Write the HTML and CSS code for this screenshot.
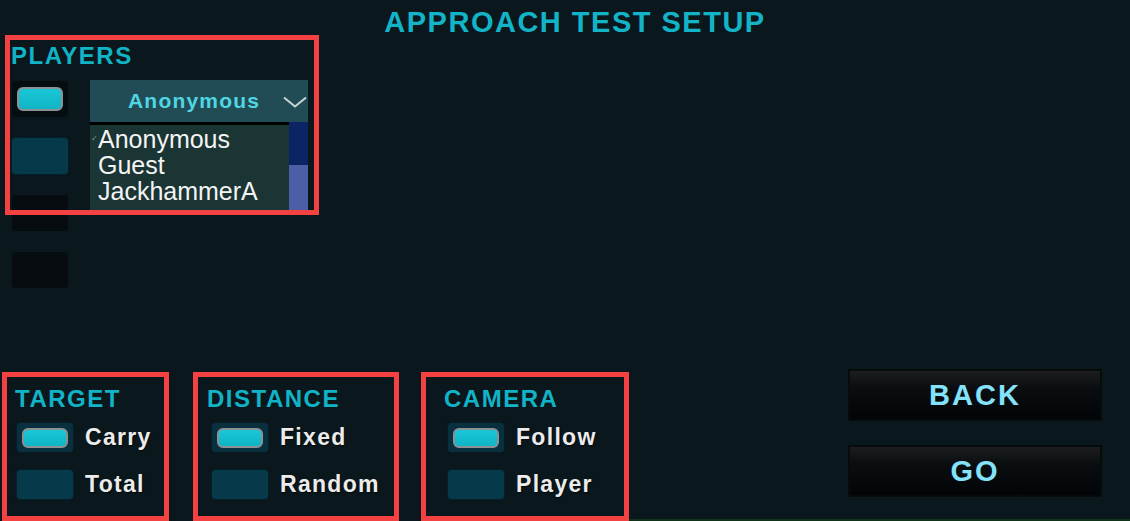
FILE: index.html
```html
<!DOCTYPE html>
<html lang="en">

<head>
    <meta charset="UTF-8">
    <meta name="viewport" content="width=device-width, initial-scale=1.0">
    <title>Approach Test Setup</title>
    <link rel="stylesheet" href="styles.css">
</head>

<body>
    <h1 class="title">APPROACH TEST SETUP</h1>

    <section class="players frame">
        <h2 class="group-label">PLAYERS</h2>
        <div class="players-body">
            <div class="slots">
                <div class="slot slot-on"><span class="pill"></span></div>
                <div class="slot slot-free"></div>
                <div class="slot slot-empty"></div>
                <div class="slot slot-empty"></div>
            </div>

            <div class="dropdown">
                <div class="dropdown-head">
                    <span class="dropdown-value">Anonymous</span>
                    <svg class="chevron" width="24" height="12" viewBox="0 0 24 12">
                        <polyline points="1,1.5 12,10.5 23,1.5" fill="none" stroke="#c6d4d6" stroke-width="2"/>
                    </svg>
                </div>
                <div class="dropdown-list">
                    <ul class="list-items">
                        <li class="selected">Anonymous</li>
                        <li>Guest</li>
                        <li>JackhammerA</li>
                    </ul>
                    <div class="scrollbar"><div class="scroll-top"></div></div>
                </div>
            </div>
        </div>
    </section>

    <div class="bottom">
        <section class="group group-target frame">
            <h2 class="group-label">TARGET</h2>
            <div class="options">
                <div class="option"><span class="toggle toggle-on"><span class="pill"></span></span>Carry</div>
                <div class="option"><span class="toggle"></span>Total</div>
            </div>
        </section>

        <section class="group group-distance frame">
            <h2 class="group-label">DISTANCE</h2>
            <div class="options">
                <div class="option"><span class="toggle toggle-on"><span class="pill"></span></span>Fixed</div>
                <div class="option"><span class="toggle"></span>Random</div>
            </div>
        </section>

        <section class="group group-camera frame">
            <h2 class="group-label">CAMERA</h2>
            <div class="options">
                <div class="option"><span class="toggle toggle-on"><span class="pill"></span></span>Follow</div>
                <div class="option"><span class="toggle"></span>Player</div>
            </div>
        </section>

        <div class="actions">
            <button class="action" type="button">BACK</button>
            <button class="action" type="button">GO</button>
        </div>
    </div>
</body>

</html>
```

FILE: styles.css
```css
body {
    margin: 0;
    padding: 0;
    width: 1130px;
    height: 521px;
    overflow: hidden;
    background-color: #0a171c;
    background-image: linear-gradient(to right, transparent 560px, #10331a 560px);
    background-size: 100% 2px;
    background-position: bottom;
    background-repeat: no-repeat;
    font-family: "Liberation Sans", Arial, sans-serif;
}

.title {
    margin: 0;
    padding: 9px 0 0 20px;
    font-size: 29px;
    line-height: 26px;
    font-weight: 700;
    letter-spacing: 1.5px;
    color: #13b4c8;
    text-align: center;
}

/* red outline drawn over each block */
.frame {
    position: relative;
    box-sizing: border-box;
}

.frame::after {
    content: "";
    position: absolute;
    inset: 0;
    border: 5px solid #f44242;
    pointer-events: none;
}

.group-label {
    margin: 0;
    font-size: 24px;
    line-height: 24px;
    font-weight: 700;
    letter-spacing: 1.5px;
    color: #12b3c6;
}

/* players */
.players {
    margin-left: 5px;
    width: 314px;
    height: 180px;
}

.players .group-label {
    padding: 9px 0 0 6px;
}

.players-body {
    display: flex;
    align-items: flex-start;
    margin-top: 12px;
    padding-left: 7px;
}

.slots {
    display: flex;
    flex-direction: column;
    gap: 21px;
    margin-top: 1px;
}

.slot {
    width: 56px;
    height: 36px;
    border-radius: 4px;
    display: flex;
    align-items: center;
    justify-content: center;
}

.slot-on {
    background-color: #060d10;
}

.slot-on .pill {
    height: 24px;
}

.slot-free {
    background-color: #063a4b;
    box-shadow: 0 0 2px #063a4b;
}

.slot-empty {
    background-color: #050b0e;
}

.dropdown {
    width: 218px;
    margin-left: 22px;
}

.dropdown-head {
    display: flex;
    align-items: center;
    height: 42px;
    padding-left: 38px;
    background-color: #214c55;
}

.dropdown-value {
    font-size: 21px;
    font-weight: 700;
    letter-spacing: 1.2px;
    color: #50d6e2;
}

.chevron {
    margin-left: auto;
    margin-right: 1px;
    margin-top: 2px;
}

.dropdown-list {
    display: flex;
    height: 88px;
    overflow: hidden;
}

.list-items {
    flex: 1;
    margin: 0;
    padding: 1px 0 0 8px;
    list-style: none;
    border-top: 3px solid #000000;
    background-color: #1b3434;
    font-size: 25px;
    line-height: 26px;
    color: #f4f4f4;
}

.list-items li {
    position: relative;
}

.selected::before {
    content: "✓";
    position: absolute;
    left: -7px;
    top: 9px;
    font-size: 8px;
    line-height: 8px;
    color: #7f9c9c;
}

.scrollbar {
    width: 19px;
    background-color: #4b5ea6;
}

.scroll-top {
    height: 43px;
    background-color: #0b2463;
}

/* bottom row */
.bottom {
    display: flex;
    align-items: flex-start;
    margin-top: 157px;
    padding-left: 2px;
}

.group {
    height: 149px;
}

.group .group-label {
    padding-top: 15px;
}

.group-target {
    width: 167px;
    margin-right: 24px;
}

.group-target .group-label {
    padding-left: 13px;
}

.group-target .options {
    padding-left: 15px;
}

.group-distance {
    width: 206px;
    margin-right: 22px;
}

.group-distance .group-label {
    padding-left: 14px;
}

.group-distance .options {
    padding-left: 19px;
}

.group-camera {
    width: 208px;
}

.group-camera .group-label {
    padding-left: 23px;
}

.group-camera .options {
    padding-left: 27px;
}

.options {
    display: flex;
    flex-direction: column;
    gap: 18px;
    margin-top: 12px;
}

.option {
    display: flex;
    align-items: center;
    gap: 12px;
    height: 29px;
    font-size: 23px;
    font-weight: 700;
    letter-spacing: 1.3px;
    color: #ececec;
    text-shadow: 1px 1px 1px rgba(0, 0, 0, 0.6);
}

.toggle {
    width: 56px;
    height: 29px;
    flex-shrink: 0;
    border-radius: 4px;
    background-color: #063a4b;
    box-shadow: 0 0 2px #063a4b;
    display: flex;
    align-items: center;
    justify-content: center;
}

.toggle-on {
    background-color: #08303e;
    box-shadow: 0 0 2px #08303e;
}

.pill {
    display: block;
    box-sizing: border-box;
    width: 46px;
    height: 20px;
    border: 2px solid #8c9294;
    border-radius: 6px;
    background: linear-gradient(#19c6d6, #0fb5c6);
}

/* buttons */
.actions {
    display: flex;
    flex-direction: column;
    gap: 24px;
    margin: -3px 28px 0 auto;
}

.action {
    width: 254px;
    height: 52px;
    border: 2px solid #080b0c;
    background: linear-gradient(#1b1d1f 0%, #0b0e10 35%, #020507 100%);
    font-family: "Liberation Sans", Arial, sans-serif;
    font-size: 29px;
    font-weight: 700;
    letter-spacing: 2px;
    color: #84e2fa;
    cursor: pointer;
}
```
